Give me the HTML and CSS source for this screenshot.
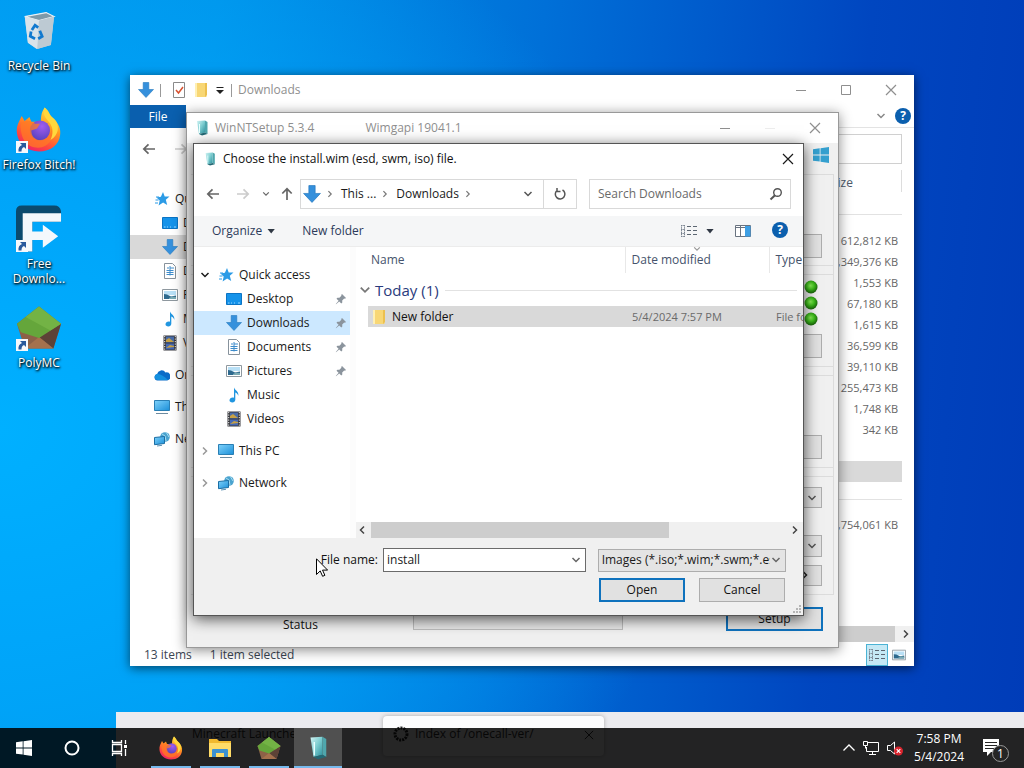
FILE: index.html
```html
<!DOCTYPE html>
<html lang="en">
<head>
<meta charset="utf-8">
<title>Desktop</title>
<link rel="stylesheet" href="styles.css">
</head>
<body>
<svg class="defs" aria-hidden="true">
  <defs>
    <linearGradient id="gFox" x1="0.8" y1="0" x2="0.3" y2="1"><stop offset="0" stop-color="#fff04a"/><stop offset="0.4" stop-color="#ff9a1f"/><stop offset="0.75" stop-color="#ff4a3d"/><stop offset="1" stop-color="#ec1f6b"/></linearGradient>
    <radialGradient id="gGlobe" cx="0.6" cy="0.3" r="0.8"><stop offset="0" stop-color="#a05cf0"/><stop offset="1" stop-color="#4f3fb8"/></radialGradient>
    <linearGradient id="gTeal" x1="0" y1="0" x2="1" y2="1"><stop offset="0" stop-color="#d4f4f4"/><stop offset="0.5" stop-color="#7ccdd0"/><stop offset="1" stop-color="#2a8f9c"/></linearGradient>
    <linearGradient id="gBlue" x1="0" y1="0" x2="1" y2="1"><stop offset="0" stop-color="#7fd2fb"/><stop offset="1" stop-color="#1b8fd8"/></linearGradient>
    <radialGradient id="gLed" cx="0.45" cy="0.4" r="0.6"><stop offset="0" stop-color="#8df55a"/><stop offset="0.5" stop-color="#3fc01c"/><stop offset="1" stop-color="#166008"/></radialGradient>
    <symbol id="down" viewBox="0 0 16 16"><path d="M5.2.5h5.600v7H15.500L8 15.500.5 7.500h4.700z" fill="#3590dc" stroke="#2478bd" stroke-width=".6"/></symbol>
    <symbol id="star" viewBox="0 0 16 16"><path d="M9 1l1.700 4.500 4.800-.1-3.700 3.400 1.400 5.200-4.100-2.600L4.600 14.500 5.700 9.600 2.500 6.600l4.400-.9z" fill="#2b9be6"/><path d="M1.500 9h3M1 12h3M2 6h3" stroke="#2b9be6" stroke-width="1"/></symbol>
    <symbol id="desk" viewBox="0 0 16 16"><path d="M.5 2.500h15v11H.5z" fill="#1593ea" stroke="#0b74c4"/><path d="M2 12h1.500M5 12h1M8 12h1M12 12h2" stroke="#9ad7ff"/></symbol>
    <symbol id="doc" viewBox="0 0 16 16"><path d="M2.500.5h8l3 3v12h-11z" fill="#fff" stroke="#87929c"/><path d="M5 5h2M8 5h4M4.500 7.500h7M4.500 9.500h7M4.500 11.500h7M8 3v9.500" stroke="#3e8ccb"/></symbol>
    <symbol id="pic" viewBox="0 0 16 16"><path d="M.5 2.500h15v11H.5z" fill="#fff" stroke="#8e989f"/><path d="M2 4h12v4H2z" fill="#b9e0f6"/><path d="M2 12V7l3 .5 4 2 5-1v3.500z" fill="#2d698e"/><path d="M7 11l3-1.500 4 .5v2H7z" fill="#7aaab3"/></symbol>
    <symbol id="music" viewBox="0 0 16 16"><path d="M8 .5c1 3 5 3.500 4.300 8.500-.5-2-1.500-3-3-3.500v7.200c0 1.600-1.300 2.800-3 2.800s-2.800-.9-2.800-2.200c0-1.500 1.500-2.700 3.200-2.700.5 0 .9.100 1.300.2z" fill="#2196e0"/></symbol>
    <symbol id="video" viewBox="0 0 16 16"><path d="M1.500.5h13v15h-13z" fill="#38393e"/><path d="M4 1.500h8v6H4z" fill="#496ca8"/><path d="M4 8.500h8v6H4z" fill="#4569b5"/><path d="M4 5l3-2 5 4H4zM4 13l4-3 4 1v1z" fill="#c7a145"/><path d="M2.700 1v14M13.300 1v14" stroke="#eee" stroke-dasharray="1.200 1.300"/></symbol>
    <symbol id="cloud" viewBox="0 0 16 16"><path d="M3.500 13.500a3.300 3.300 0 0 1-.4-6.500A4.600 4.600 0 0 1 11.500 5.500a4 4 0 0 1 1.700 8z" fill="#0a6cc8"/><path d="M3 7c3-.5 7 2 11 6H4C0 13-.5 8 3 7z" fill="#1490df"/></symbol>
    <symbol id="pc" viewBox="0 0 16 16"><path d="M.5 1.500h15v10H.5z" fill="url(#gBlue)" stroke="#2a7fb4"/><path d="M2 14.500h12" stroke="#6d8ba0"/></symbol>
    <symbol id="net" viewBox="0 0 16 16"><circle cx="11" cy="6" r="4.800" fill="#4aa3cf"/><path d="M8 3l3 2 1 5M12 1l3 5" stroke="#a7dcf0" fill="none"/><path d="M.5 6.500l10-1v7l-10 1.200z" fill="url(#gBlue)" stroke="#1b6ea4"/><path d="M3 15l5-.7" stroke="#5d93b4"/></symbol>
    <symbol id="pin" viewBox="0 0 12 12"><path d="M7 1l4 4-1 .8-.8-.2-2 2 .1 2-1 .9L4.200 8.400 1 11.200.8 11l2.800-3.200L1.500 5.700l.9-1 2 .1 2-2-.2-.8z" fill="#8b949d"/></symbol>
    <symbol id="folder" viewBox="0 0 16 16"><path d="M2 1h11.500v14H2z" fill="#f8d775"/><path d="M2 1h2v14H2z" fill="#fff0b4"/><path d="M12 1h2v12l-2 2z" fill="#ecc04f"/></symbol>
    <symbol id="setup" viewBox="0 0 16 16"><path d="M3 1l8-.5v12L5 14z" fill="url(#gTeal)"/><path d="M11 .5l2.500 1.500v12l-2.500-1.500z" fill="#4fa7ad"/><path d="M5 14l6-1.500 2.500 1.500L8 15.500z" fill="#236975"/><path d="M5.500 4v9" stroke="#e8ffff"/></symbol>
    <symbol id="win" viewBox="0 0 16 16"><path d="M0 2.300l6.700-1v6.200H0zM7.500 1.200L16 0v7.500H7.500zM0 8.400h6.700v6.200L0 13.700zM7.500 8.400H16V16l-8.500-1.200z" fill="currentColor"/></symbol>
    <symbol id="chev" viewBox="0 0 10 10"><path d="M1.500 3l3.500 3.500L8.500 3" fill="none" stroke="currentColor" stroke-width="1.500"/></symbol>
    <symbol id="left" viewBox="0 0 14 14"><path d="M13 7H2M6.500 2.300L1.800 7l4.700 4.700" fill="none" stroke="currentColor" stroke-width="1.700"/></symbol>
    <symbol id="close" viewBox="0 0 12 12"><path d="M1 1l10 10M11 1L1 11" stroke="currentColor" stroke-width="1.200"/></symbol>
    <symbol id="min" viewBox="0 0 12 12"><path d="M1 6.500h10" stroke="currentColor"/></symbol>
    <symbol id="max" viewBox="0 0 12 12"><path d="M1.500 1.500h9v9h-9z" fill="none" stroke="currentColor"/></symbol>
    <symbol id="list" viewBox="0 0 18 14"><path d="M1 1.500h4M1 5.500h4M1 9.500h4M1 12.500h4M1.500 1v12M4.500 1v12" stroke="#7b8490" stroke-dasharray="1.500 .7"/><path d="M7 2.500h4M13 2.500h4M7 6.500h4M13 6.500h4M7 10.500h4M13 10.500h4" stroke="#5c6672"/></symbol>
    <symbol id="fox" viewBox="0 0 48 48"><path d="M30 1c5 4 5 8 9 12 6 5 8 11 7 17C45 40 36 47 24 47S2 39 1 28C0 21 3 16 6 10l3 5 5-4 2 5 10 0c0-7 1-11 4-15z" fill="url(#gFox)"/><circle cx="25" cy="25" r="10.500" fill="url(#gGlobe)"/><path d="M5 18c6-6 11-2 15 0h5l-3 5-6 2c0 8 7 12 14 9 4-2 7-6 7-11 4 8-2 20-14 20C11 43 4 33 5 18z" fill="#ff7a26" opacity=".75"/><path d="M30 1c-3 7 1 11 5 16 4 5 4 12 1 18 9-5 10-16 4-22-5-4-7-7-10-12z" fill="#ffd83d"/></symbol>
    <symbol id="poly" viewBox="0 0 48 48"><path d="M24 2L1 20l8 26h30l8-26z" fill="#8d6147"/><path d="M24 34l15 12 8-26z" fill="#5d4237"/><path d="M9 46l15-12 15 12z" fill="#a5714d"/><path d="M24 2L1 20l4 9 19 6 17-11 6-4z" fill="#65a63b"/><path d="M24 2l23 18-11 7L10 13z" fill="#73b345"/></symbol>
    <symbol id="link" viewBox="0 0 12 12"><path d="M0 0h12v12H0z" fill="#f6f8fc"/><path d="M4 2h6v6L8 6c-2 1-2.500 2-2.500 4.500H2.500C2 7 3.500 5 6 4z" fill="#28599d"/></symbol>
  </defs>
</svg>

<main class="desktop">
  <nav class="shortcuts" aria-label="Desktop shortcuts">
    <a class="shortcut" href="#bin"><span class="pic"><svg class="big" viewBox="0 0 48 48"><path d="M6 7l27-5 10 5-4 36-18 5-11-8z" fill="#c9d5de"/><path d="M6 7l18 5 19-5-10-5z" fill="#7e99a9" stroke="#e9f1f6" stroke-width="1.500"/><path d="M6 7l18 5-2 36-12-8z" fill="#d9e3ea"/><path d="M24 12l19-5-4 36-17 5z" fill="#bdcad3"/><path d="M15 24l4-6 4 3M25 25l3 7-5 3M19 35l-6-3 1-6" fill="none" stroke="#1179cf" stroke-width="3.500"/></svg></span><span>Recycle Bin</span></a>
    <a class="shortcut" href="#firefox"><span class="pic"><svg class="big"><use href="#fox"/></svg><svg class="link"><use href="#link"/></svg></span><span>Firefox Bitch!</span></a>
    <a class="shortcut" href="#fdm"><span class="pic"><svg class="big" viewBox="0 0 48 48"><path d="M0 6q0-6 6-6h34q6 0 7 6v11H17v31H0z" fill="#0b4a6e"/><path d="M7 8h40v9H17v10h11v-7l16 12-16 12v-8H17v12H7z" fill="#f4f8fc"/></svg><svg class="link"><use href="#link"/></svg></span><span>Free Downlo...</span></a>
    <a class="shortcut" href="#polymc"><span class="pic"><svg class="big"><use href="#poly"/></svg><svg class="link"><use href="#link"/></svg></span><span>PolyMC</span></a>
  </nav>

  <section class="window browser" aria-label="Browser">
    <div class="tab"><span>Minecraft Launcher M</span></div>
    <div class="tab current"><svg class="i16" viewBox="0 0 16 16"><circle cx="8" cy="8" r="6" fill="none" stroke="#222" stroke-width="3" stroke-dasharray="2 1"/></svg><span>Index of /onecall-ver/</span><svg class="i10"><use href="#close"/></svg></div>
  </section>

  <section class="window explorer" aria-label="Downloads">
    <header class="titlebar faded">
      <svg class="i16"><use href="#down"/></svg><i class="bar"></i>
      <svg class="i16" viewBox="0 0 16 16"><path d="M2.500.5h11v15h-11z" fill="#fff" stroke="#8a8a8a"/><path d="M5 8l2.500 3L12 5" fill="none" stroke="#d8512f" stroke-width="1.500"/></svg>
      <svg class="i16"><use href="#folder"/></svg>
      <svg class="i10 dark" viewBox="0 0 10 10"><path d="M1.500 2.500h7" stroke="#222"/><path d="M1 5h8L5 9z" fill="#222"/></svg><i class="bar"></i>
      <h2>Downloads</h2>
      <span class="caption wide"><button aria-label="Minimize"><svg><use href="#min"/></svg></button><button aria-label="Maximize"><svg><use href="#max"/></svg></button><button aria-label="Close"><svg><use href="#close"/></svg></button></span>
    </header>
    <div class="ribbon"><button class="file">File</button><span class="ribbon-right"><svg class="i10"><use href="#chev"/></svg><button class="help">?</button></span></div>
    <div class="exp-nav"><svg class="i14"><use href="#left"/></svg><svg class="i14 flip pale"><use href="#left"/></svg><input class="exp-search" type="search" aria-label="Search"></div>
    <div class="exp-main">
      <ul class="tree exp-tree">
        <li class="top"><svg class="i16"><use href="#star"/></svg>Quick access</li>
        <li><svg class="i16"><use href="#desk"/></svg>Desktop</li>
        <li class="sel"><svg class="i16"><use href="#down"/></svg>Downloads</li>
        <li><svg class="i16"><use href="#doc"/></svg>Documents</li>
        <li><svg class="i16"><use href="#pic"/></svg>Pictures</li>
        <li><svg class="i16"><use href="#music"/></svg>Music</li>
        <li><svg class="i16"><use href="#video"/></svg>Videos</li>
        <li class="top gap"><svg class="i16"><use href="#cloud"/></svg>OneDrive</li>
        <li class="top gap"><svg class="i16"><use href="#pc"/></svg>This PC</li>
        <li class="top gap"><svg class="i16"><use href="#net"/></svg>Network</li>
      </ul>
      <div class="exp-list">
        <table class="sizes">
          <thead><tr><th>Size</th></tr></thead>
          <tbody>
            <tr class="group"><td></td></tr>
            <tr><td>612,812 KB</td></tr><tr><td>5,349,376 KB</td></tr><tr><td>1,553 KB</td></tr><tr><td>67,180 KB</td></tr><tr><td>1,615 KB</td></tr><tr><td>36,599 KB</td></tr><tr><td>39,110 KB</td></tr><tr><td>255,473 KB</td></tr><tr><td>1,748 KB</td></tr><tr><td>342 KB</td></tr>
            <tr><td></td></tr><tr class="sel"><td></td></tr><tr class="group2"><td></td></tr><tr><td>4,754,061 KB</td></tr>
          </tbody>
        </table>
        <div class="hscroll"><i class="thumb"></i><svg class="i10 r"><use href="#chev"/></svg></div>
      </div>
    </div>
    <footer class="status"><span>13 items</span><span>1 item selected</span><span class="views"><button class="on" aria-label="Details"><svg class="i18"><use href="#list"/></svg></button><button aria-label="Large icons"><svg class="i14"><use href="#pic"/></svg></button></span></footer>
  </section>

  <section class="window winnt" aria-label="WinNTSetup">
    <header class="titlebar faded">
      <svg class="i16"><use href="#setup"/></svg><h2>WinNTSetup 5.3.4</h2><span class="api">Wimgapi 19041.1</span>
      <span class="caption wide"><button aria-label="Minimize"><svg><use href="#min"/></svg></button><button aria-label="Maximize"><svg class="ghost"><use href="#min"/></svg></button><button aria-label="Close"><svg><use href="#close"/></svg></button></span>
    </header>
    <div class="nt-tabs"><svg class="i16 winblue"><use href="#win"/></svg></div>
    <div class="nt-page">
      <div class="box b1"><button class="btn" aria-label="Select source"></button></div>
      <div class="box b2"><div class="leds"><svg class="i14" viewBox="0 0 14 14"><circle cx="7" cy="7" r="6.500" fill="url(#gLed)"/></svg><svg class="i14" viewBox="0 0 14 14"><circle cx="7" cy="7" r="6.500" fill="url(#gLed)"/></svg><svg class="i14" viewBox="0 0 14 14"><circle cx="7" cy="7" r="6.500" fill="url(#gLed)"/></svg></div><button class="btn" aria-label="Select boot drive"></button></div>
      <div class="box b3"><button class="btn" aria-label="Select drive"></button></div>
      <div class="box b4"><button class="btn" aria-label="Edition"><svg class="i10"><use href="#chev"/></svg></button><button class="btn" aria-label="Options"><svg class="i10"><use href="#chev"/></svg></button><button class="btn more" aria-label="More"><svg class="i10 r"><use href="#chev"/></svg></button></div>
    </div>
    <footer class="nt-foot"><span class="stat">Status</span><i class="progress"></i><button class="btn primary">Setup</button></footer>
  </section>

  <section class="window dialog" role="dialog" aria-label="Choose the install.wim (esd, swm, iso) file.">
    <header class="titlebar">
      <svg class="i14"><use href="#setup"/></svg><h1>Choose the install.wim (esd, swm, iso) file.</h1>
      <span class="caption"><button aria-label="Close"><svg><use href="#close"/></svg></button></span>
    </header>
    <div class="navrow">
      <button aria-label="Back"><svg class="i14"><use href="#left"/></svg></button>
      <button class="pale" aria-label="Forward"><svg class="i14 flip"><use href="#left"/></svg></button>
      <button aria-label="Recent locations"><svg class="i8"><use href="#chev"/></svg></button>
      <button aria-label="Up"><svg class="i14 up"><use href="#left"/></svg></button>
      <div class="address"><svg class="i18"><use href="#down"/></svg><svg class="i8 r"><use href="#chev"/></svg><a href="#pc">This ...</a><svg class="i8 r"><use href="#chev"/></svg><a href="#downloads">Downloads</a><svg class="i8 r"><use href="#chev"/></svg><button class="drop" aria-label="Previous locations"><svg class="i10"><use href="#chev"/></svg></button><button class="refresh" aria-label="Refresh"><svg class="i14" viewBox="0 0 14 14"><path d="M9.500 3A4.800 4.800 0 1 1 4 3.500M4 1v3.500h3.500" fill="none" stroke="#555" stroke-width="1.500"/></svg></button></div>
      <div class="search"><input type="search" aria-label="Search Downloads" placeholder="Search Downloads"><svg class="i14" viewBox="0 0 14 14"><circle cx="8.500" cy="5.500" r="3.800" fill="none" stroke="#555" stroke-width="1.400"/><path d="M6 8.200L1.500 12.500" stroke="#555" stroke-width="2"/></svg></div>
    </div>
    <div class="toolbar"><button>Organize<i class="tri"></i></button><button>New folder</button><span class="tools"><button aria-label="Change view"><svg class="i18"><use href="#list"/></svg><i class="tri"></i></button><button aria-label="Preview pane"><svg class="i16" viewBox="0 0 16 16"><path d="M.5 2.500h15v11H.5zM5.500 2v12M.5 4.500h15" fill="#fff" stroke="#697380"/><path d="M10 3h5.500v10.500H10z" fill="#3e9fe4"/></svg></button><button class="help">?</button></span></div>
    <div class="content">
      <ul class="tree">
        <li class="top"><svg class="i10 exp"><use href="#chev"/></svg><svg class="i16"><use href="#star"/></svg>Quick access</li>
        <li><svg class="i16"><use href="#desk"/></svg>Desktop<svg class="i12 pinned"><use href="#pin"/></svg></li>
        <li class="sel"><svg class="i16"><use href="#down"/></svg>Downloads<svg class="i12 pinned"><use href="#pin"/></svg></li>
        <li><svg class="i16"><use href="#doc"/></svg>Documents<svg class="i12 pinned"><use href="#pin"/></svg></li>
        <li><svg class="i16"><use href="#pic"/></svg>Pictures<svg class="i12 pinned"><use href="#pin"/></svg></li>
        <li><svg class="i16"><use href="#music"/></svg>Music</li>
        <li><svg class="i16"><use href="#video"/></svg>Videos</li>
        <li class="top gap"><svg class="i10 r pale2"><use href="#chev"/></svg><svg class="i16"><use href="#pc"/></svg>This PC</li>
        <li class="top gap"><svg class="i10 r pale2"><use href="#chev"/></svg><svg class="i16"><use href="#net"/></svg>Network</li>
      </ul>
      <div class="files">
        <table>
          <colgroup><col class="c1"><col class="c2"><col></colgroup>
          <thead><tr><th>Name</th><th>Date modified<svg class="i8 sort"><use href="#chev"/></svg></th><th>Type</th></tr></thead>
          <tbody>
            <tr class="today"><td colspan="3"><div><svg class="i12"><use href="#chev"/></svg><span>Today (1)</span><i></i></div></td></tr>
            <tr class="row"><td><span><svg class="i16"><use href="#folder"/></svg>New folder</span></td><td>5/4/2024 7:57 PM</td><td>File folder</td></tr>
          </tbody>
        </table>
        <div class="hscroll"><svg class="i10 l"><use href="#chev"/></svg><i class="thumb"></i><svg class="i10 r"><use href="#chev"/></svg></div>
      </div>
    </div>
    <footer class="dlg-foot">
      <div class="line"><label for="fname">File name:</label><span class="combo"><input id="fname" type="text" value="install"><svg class="i10"><use href="#chev"/></svg></span><span class="combo pick"><select aria-label="File type"><option>Images (*.iso;*.wim;*.swm;*.esd)</option></select><svg class="i10"><use href="#chev"/></svg></span></div>
      <div class="line actions"><button class="btn primary">Open</button><button class="btn">Cancel</button></div>
      <svg class="grip" viewBox="0 0 10 10"><path d="M8 1v2M8 4v2M8 7v2M5 4v2M5 7v2M2 7v2" stroke="#b5b5b5" stroke-width="2"/></svg>
    </footer>
  </section>

  <svg class="cursor" viewBox="0 0 12 19"><path d="M.5.800v15.700l3.700-3.600 2.400 5.400 2.300-1-2.400-5.200h5.100z" fill="#fff" stroke="#000"/></svg>

  <footer class="taskbar">
    <button class="sys" aria-label="Start"><svg class="i16"><use href="#win"/></svg></button>
    <button class="sys" aria-label="Cortana"><svg class="i18" viewBox="0 0 18 18"><circle cx="9" cy="9" r="6.500" fill="none" stroke="#fff" stroke-width="2"/></svg></button>
    <button class="sys" aria-label="Task view"><svg class="i18" viewBox="0 0 18 18"><path d="M1.500 1v2.500h9V1M1.500 17v-2.500h9V17M1.500 5.500h9v7h-9zM14.500 1v4M14.500 10v7" fill="none" stroke="#fff" stroke-width="1.300"/><path d="M13 6h3v3h-3z" fill="#fff"/></svg></button>
    <div class="apps">
      <button aria-label="Firefox"><svg class="i24"><use href="#fox"/></svg></button>
      <button aria-label="File Explorer"><svg class="i24" viewBox="0 0 24 24"><path d="M1 3h8l2 2h12v16H1z" fill="#f1b92f"/><path d="M1 7h22v14H1z" fill="#ffdc68"/><path d="M4 21v-7q0-1 1-1h14q1 0 1 1v7h-4v-4H8v4z" fill="#3d92d2"/></svg></button>
      <button aria-label="PolyMC"><svg class="i24"><use href="#poly"/></svg></button>
      <button class="active" aria-label="WinNTSetup"><svg class="i24"><use href="#setup"/></svg></button>
    </div>
    <div class="tray">
      <svg class="i14" viewBox="0 0 14 14"><path d="M1.500 9.500L7 4l5.500 5.500" fill="none" stroke="#fff" stroke-width="1.300"/></svg>
      <svg class="i18" viewBox="0 0 18 18"><path d="M6 3.500h10.500v9H4.500V8M10.500 12.500v3M7 15.500h7M1.500 2.500h4v4h-4zM3.500 6.500v3" fill="none" stroke="#fff"/></svg>
      <svg class="i18" viewBox="0 0 18 18"><path d="M1.500 6.500h3L8.500 3v12l-4-3.500h-3z" fill="none" stroke="#fff"/><circle cx="12.500" cy="12" r="4.500" fill="#d9252e"/><path d="M10.700 10.200l3.600 3.600M14.300 10.200l-3.600 3.600" stroke="#fff" stroke-width="1.200"/></svg>
      <time datetime="2024-05-04T19:58">7:58 PM<br>5/4/2024</time>
      <button class="notes" aria-label="1 notification"><svg viewBox="0 0 24 26"><path d="M1 2h16v13H9l-4 4v-4H1z" fill="#fff"/><path d="M3 5.500h12M3 8.500h12M3 11.500h12" stroke="#252525"/></svg><span>1</span></button>
    </div>
  </footer>
</main>
</body>
</html>
```
FILE: styles.css
```css
* { box-sizing: border-box; }
body { margin: 0; font: 12px/16px "Open Sans", "Noto Sans", sans-serif; color: #1a1a1a; }
button, input, select { font: inherit; color: inherit; border: 0; padding: 0; margin: 0; background: none; outline: 0; }
button { display: inline-flex; align-items: center; justify-content: center; }
a { color: inherit; text-decoration: none; }
ul { list-style: none; margin: 0; padding: 0; }
h1, h2 { font-size: 12px; font-weight: 400; margin: 0; white-space: nowrap; }
table { border-collapse: collapse; }
th { font-weight: 400; text-align: left; }
svg { display: block; flex: none; }
.defs { position: absolute; width: 0; height: 0; }
.i8 { width: 8px; height: 8px; }
.i10 { width: 10px; height: 10px; }
.i12 { width: 12px; height: 12px; }
.i14 { width: 14px; height: 14px; }
.i16 { width: 16px; height: 16px; }
.i18 { width: 18px; height: 18px; }
.i24 { width: 24px; height: 24px; }
.r { transform: rotate(-90deg); }
.l { transform: rotate(90deg); }
.up { transform: rotate(90deg); }
.flip { transform: scaleX(-1); }

.desktop { position: relative; height: 100vh; overflow: hidden; background: radial-gradient(ellipse 700px 600px at 0 56%, #00b0ff 0%, #00a6fa 35%, transparent 100%), linear-gradient(95deg, #0097ec 0%, #0092e8 20%, #0070d8 50%, #0046c0 80%, #003cb8 100%); }

.shortcuts { display: flex; flex-direction: column; width: 78px; padding-top: 7px; }
.shortcut { display: flex; flex-direction: column; align-items: center; text-align: center; height: 99px; color: #fff; line-height: 15px; text-shadow: 1px 1px 2px #000, 0 1px 3px #000; white-space: nowrap; }
.shortcut:nth-child(3) { white-space: normal; }
.shortcut .pic { position: relative; margin-bottom: 4px; }
.big { width: 46px; height: 47px; }
.shortcut:first-child .big { width: 38px; height: 42px; margin: 2px 0 3px; }
.link { position: absolute; left: 0; bottom: 0; width: 12px; height: 12px; }

.window { position: absolute; display: flex; flex-direction: column; background: #fff; }
.titlebar { display: flex; align-items: center; flex: none; height: 30px; }
.faded { color: #8f8f8f; }
.caption { display: flex; margin-left: auto; }
.caption button { width: 31px; height: 28px; }
.caption.wide { padding-right: 1px; }
.caption.wide button { width: 45px; }
.caption svg { width: 12px; height: 12px; }
.caption .ghost { opacity: .15; }
.bar { width: 1px; height: 13px; background: #999; }
.help { width: 16px; height: 16px; border-radius: 50%; background: #0b5fae; color: #fff; font-weight: 700; }
.btn { width: 86px; height: 24px; border: 1px solid #adadad; background: #e1e1e1; color: #111; }
.btn.primary { border: 2px solid #0f72bd; }

.browser { left: 116px; right: 0; top: 712px; bottom: 0; flex-direction: row; background: #ebebef; padding-top: 4px; }
.tab { width: 267px; height: 40px; padding: 10px 0 0 76px; white-space: nowrap; color: #333; }
.tab.current { width: 221px; display: flex; align-items: flex-start; gap: 6px; padding: 10px 10px 0; background: #fcfcfd; border-radius: 4px; box-shadow: 0 0 4px #aaa; }
.tab.current .i10 { margin: 4px 0 0 auto; }

.explorer { left: 130px; top: 75px; width: 784px; height: 591px; box-shadow: 0 2px 10px #0009; }
.explorer > .titlebar { gap: 6px; padding-left: 8px; }
.explorer .bar + .i16 { margin-left: 4px; }
.ribbon { display: flex; height: 23px; border-bottom: 1px solid #e3e3e3; }
.file { width: 56px; height: 23px; background: #0a5fae; color: #fff; }
.ribbon-right { display: flex; align-items: center; gap: 9px; margin-left: auto; padding-right: 3px; color: #888; }
.exp-nav { display: flex; align-items: center; gap: 18px; height: 42px; padding: 0 12px; color: #666; }
.exp-search { width: 140px; height: 30px; margin-left: auto; border: 1px solid #d0d0d0; }
.exp-main { display: flex; flex: 1; min-height: 0; }
.exp-tree { width: 180px; padding-top: 17px; }
.exp-list { display: flex; flex-direction: column; flex: 1; align-items: flex-end; color: #666; }
.sizes { width: 100px; margin-right: 12px; text-align: right; }
.sizes th { height: 26px; padding-left: 29px; color: #4c5a6c; background: linear-gradient(#ddd, #ddd) 100% 0 / 1px 22px no-repeat; }
.sizes td { height: 21px; padding: 0 4px 0 0; font-size: 11px; }
.sizes .group td { height: 34px; background: linear-gradient(#e2e2e2, #e2e2e2) 0 18px / 100% 1px no-repeat; }
.sizes .group2 td { height: 32px; background: linear-gradient(#e2e2e2, #e2e2e2) 0 17px / 100% 1px no-repeat; }
.sizes .sel td { background: #d9d9d9; }
.exp-list .hscroll { width: 100%; margin-top: auto; padding-right: 3px; }
.exp-list .thumb { margin: 0 2px 0 300px; flex: 1; }
.status { display: flex; align-items: center; gap: 18px; height: 24px; padding: 1px 4px 0 14px; color: #3b4553; }
.views { display: flex; margin-left: auto; }
.views button { width: 22px; height: 22px; }
.views .on { background: #c5e9f5; border: 1px solid #4bb3d5; }

.winnt { left: 186px; top: 112px; width: 653px; height: 536px; background: #f0f0f0; border: 1px solid #999; box-shadow: 0 2px 12px #0007; }
.winnt .titlebar { background: #fff; padding-left: 7px; gap: 5px; }
.api { margin-left: 46px; }
.winblue { color: #35a0cf; }
.nt-tabs { display: flex; justify-content: flex-end; align-items: center; height: 31px; padding: 0 9px 8px 0; }
.nt-page { display: flex; flex-direction: column; gap: 8px; margin: 0 4px; border: 1px solid #dcdcdc; border-width: 1px 1px 0 0; }
.box { display: flex; flex-direction: column; align-items: flex-end; border: 1px solid #dcdcdc; border-width: 0 0 1px; padding-right: 11px; }
.box + .box { border-top-width: 1px; }
.b1 { height: 91px; padding-top: 59px; }
.b2 { height: 93px; padding-top: 5px; }
.leds { display: flex; flex-direction: column; gap: 2px; margin: 0 4px 8px 0; }
.b3 { height: 93px; padding-top: 59px; }
.b4 { height: 119px; padding-top: 10px; }
.b4 .btn { justify-content: flex-end; padding-right: 4px; margin-bottom: 8px; color: #555; }
.b4 .btn:first-child { margin-bottom: 27px; }
.b4 .more { padding-right: 11px; color: #222; }
.nt-foot { display: flex; flex: 1; align-items: flex-start; padding: 12px 15px 0 96px; }
.stat { width: 130px; padding-top: 10px; color: #111; }
.progress { width: 210px; height: 23px; border: 1px solid #bcbcbc; background: #e6e6e6; }
.nt-foot .btn { width: 97px; margin-left: auto; }

.dialog { left: 193px; top: 143px; width: 611px; height: 473px; border: 1px solid #555; box-shadow: 0 3px 14px #000a; }
.dialog > .titlebar { padding-left: 9px; gap: 6px; }
.dialog > .titlebar h1 { color: #111; }
.navrow { display: flex; align-items: center; height: 42px; padding: 0 12px 2px; color: #666; }
.navrow > button { width: 14px; height: 24px; margin-right: 16px; }
.navrow > button:nth-child(3) { width: 8px; margin: 0 10px 0 -4px; }
.navrow > button:nth-child(4) { margin-right: 6px; }
.pale { color: #ccc; }
.address { display: flex; align-items: center; gap: 8px; flex: 273; min-width: 0; height: 30px; padding-left: 2px; border: 1px solid #d9d9d9; color: #1a1a1a; white-space: nowrap; }
.address > .i8 { color: #777; margin: 0 -1px 0 -3px; }
.drop { margin-left: auto; margin-right: 2px; color: #555; }
.refresh { width: 33px; height: 28px; border-left: 1px solid #d9d9d9; }
.search { display: flex; align-items: center; flex: 185; min-width: 0; height: 30px; margin-left: 12px; padding: 0 7px 0 8px; border: 1px solid #d9d9d9; }
.search input { flex: 1; min-width: 0; color: #666; }
.search input::placeholder { color: #6a6a6a; opacity: 1; }
.toolbar { display: flex; align-items: center; gap: 27px; height: 31px; padding: 0 15px 0 18px; background: #f5f6f7; border-bottom: 1px solid #ececec; color: #2c3a5a; }
.tri { width: 8px; height: 5px; margin-left: 5px; background: #2f3844; clip-path: polygon(0 0, 100% 0, 50% 100%); }
.tools { display: flex; gap: 21px; margin-left: auto; }
.tools .tri { margin-left: 8px; }
.content { display: flex; flex: 1; min-height: 0; }
.tree { color: #1a1a1a; white-space: nowrap; }
.tree li { display: flex; align-items: center; gap: 5px; height: 24px; padding-left: 32px; }
.tree .gap { margin-top: 8px; }
.tree .top { padding-left: 24px; }
.content .tree { width: 162px; padding-top: 16px; border-right: 6px solid #fcfcfc; }
.content .tree .top { padding-left: 6px; }
.content .top .i16 { margin-left: 3px; }
.content .tree .sel { background: #cce8ff; }
.exp-tree .sel { background: #d9d9d9; }
.pinned { margin-left: auto; margin-right: 3px; }
.pale2 { color: #999; }
.files { display: flex; flex: 1; flex-direction: column; min-width: 0; overflow: hidden; }
.files table { width: 100%; table-layout: fixed; white-space: nowrap; }
.c1 { width: 269px; }
.c2 { width: 144px; }
.files th { position: relative; height: 26px; padding: 0 0 0 6px; color: #45536c; border-left: 1px solid #e8e8e8; }
.files th:first-child { padding-left: 15px; border-left: 0; }
.sort { position: absolute; left: 67px; top: -2px; color: #999; }
.today td { padding: 0; height: 33px; }
.today div { display: flex; align-items: center; gap: 4px; padding: 1px 6px 0 3px; font-size: 15px; line-height: 20px; color: #2a3a7c; }
.today .i12 { color: #777; }
.today i { flex: 1; height: 1px; background: #e2e2e2; margin-left: 2px; }
.row td { height: 21px; padding: 0 0 0 7px; background: #d9d9d9; color: #6a6a6a; overflow: hidden; font-size: 11px; }
.row td:first-child { padding-left: 15px; background: linear-gradient(90deg, #fff 12px, #d9d9d9 12px); color: #111; font-size: 12px; }
.row span { display: flex; gap: 5px; }
.hscroll { display: flex; align-items: center; gap: 4px; height: 16px; margin-top: auto; background: #f0f0f0; color: #444; }
.hscroll .thumb { align-self: stretch; background: #cdcdcd; }
.files .hscroll { padding: 0 3px 0 1px; }
.files .thumb { width: 298px; }
.files .hscroll .r { margin-left: auto; }
.dlg-foot { position: relative; height: 77px; padding: 10px 17px 0 123px; background: #f0f0f0; }
.line { display: flex; align-items: center; height: 24px; }
.line label { flex: none; width: 61px; text-align: right; white-space: nowrap; color: #111; }
.combo { position: relative; display: flex; align-items: center; flex: 203; min-width: 0; height: 24px; margin-left: 5px; padding: 0 4px 0 3px; border: 1px solid #6b6b6b; background: #fff; }
.combo input { flex: 1; min-width: 0; }
.combo svg { color: #666; pointer-events: none; }
.combo.pick { flex: 188; height: 23px; margin-left: 12px; border-color: #adadad; background: #e4e4e4; }
.pick select { appearance: none; flex: 1; min-width: 0; margin-right: 1px; overflow: hidden; text-overflow: clip; }
.actions { justify-content: flex-end; gap: 14px; margin-top: 6px; padding-right: 1px; }
.grip { position: absolute; right: 1px; bottom: 1px; width: 10px; height: 10px; }

.cursor { position: absolute; left: 316px; top: 558px; width: 12px; height: 19px; }

.taskbar { position: absolute; left: 0; right: 0; bottom: 0; display: flex; height: 40px; background: #000000d9; color: #fff; }
.sys { width: 48px; }
.apps { display: flex; margin-left: 3px; }
.apps button { width: 48px; height: 40px; margin-right: 1px; padding: 0 4px; position: relative; }
.apps button::after { content: ""; position: absolute; left: 4px; right: 4px; bottom: 0; height: 2px; background: #76b9ed; }
.apps .active { background: #505050; }
.apps .active::after { left: 0; right: 0; }
.tray { display: flex; align-items: center; margin-left: auto; padding-right: 14px; gap: 6px; }
.tray time { margin-left: 4px; text-align: center; line-height: 18px; }
.notes { position: relative; width: 28px; height: 28px; margin-left: 12px; align-items: flex-start; justify-content: flex-start; }
.notes svg { width: 24px; height: 26px; margin-top: 3px; }
.notes span { position: absolute; left: 10px; top: 11px; width: 17px; height: 17px; border: 1px solid #999; border-radius: 50%; background: #252525; line-height: 15px; }
```
